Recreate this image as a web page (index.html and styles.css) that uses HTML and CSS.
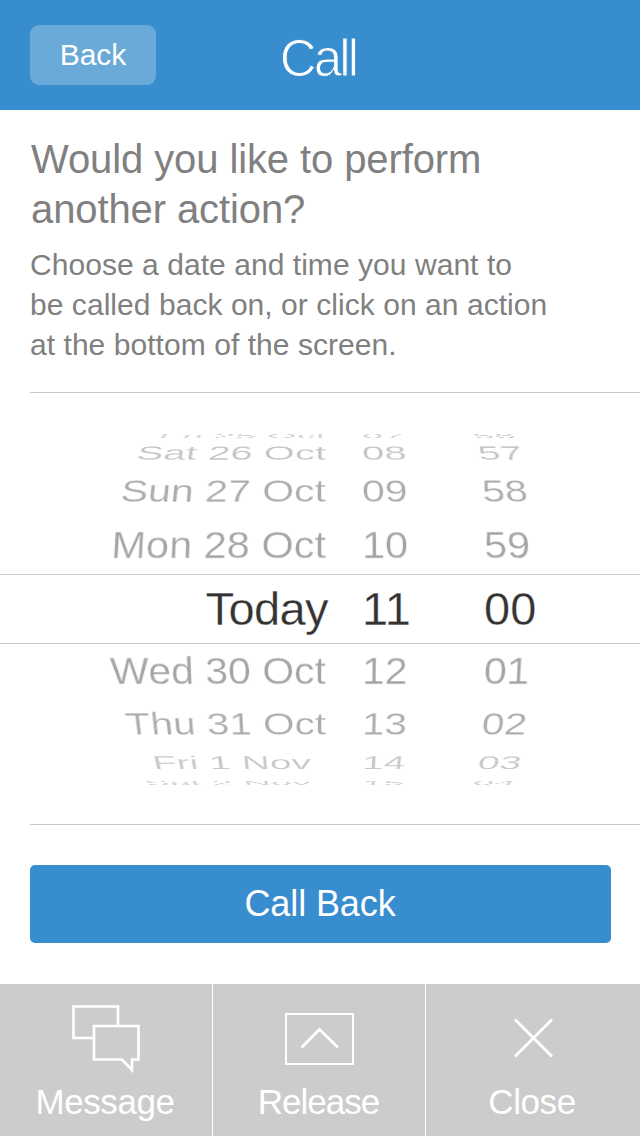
FILE: index.html
```html
<!DOCTYPE html>
<html lang="en">
<head>
<meta charset="utf-8">
<title>Call</title>
<link rel="stylesheet" href="styles.css">
</head>
<body>
<div class="screen">
  <header class="topbar">
    <button class="back">Back</button>
    <h1 class="title">Call</h1>
  </header>
  <main class="content">
    <section class="intro">
      <h2 class="question">Would you like to perform<br>another action?</h2>
      <p class="hint">Choose a date and time you want to<br>be called back on, or click on an action<br>at the bottom of the screen.</p>
    </section>
    <section class="picker">
      <div class="wheel">
        <div class="row up4"><span class="date">Fri 25 Oct</span><span class="hour">07</span><span class="minute">56</span></div>
        <div class="row up3"><span class="date">Sat 26 Oct</span><span class="hour">08</span><span class="minute">57</span></div>
        <div class="row up2"><span class="date">Sun 27 Oct</span><span class="hour">09</span><span class="minute">58</span></div>
        <div class="row up1"><span class="date">Mon 28 Oct</span><span class="hour">10</span><span class="minute">59</span></div>
        <div class="row current"><span class="date">Today</span><span class="hour">11</span><span class="minute">00</span></div>
        <div class="row down1"><span class="date">Wed 30 Oct</span><span class="hour">12</span><span class="minute">01</span></div>
        <div class="row down2"><span class="date">Thu 31 Oct</span><span class="hour">13</span><span class="minute">02</span></div>
        <div class="row down3"><span class="date">Fri 1 Nov</span><span class="hour">14</span><span class="minute">03</span></div>
        <div class="row down4"><span class="date">Sat 2 Nov</span><span class="hour">15</span><span class="minute">04</span></div>
      </div>
    </section>
    <button class="callback">Call Back</button>
  </main>
  <nav class="actions">
    <a class="action message">
      <svg class="icon" width="70" height="70" viewBox="0 0 70 70"><path d="M22 35H2.500V3.500H47V22M23 23H67.500V56.500H61V67L51 56.500H23Z"/></svg>
      <span class="label">Message</span>
    </a>
    <a class="action release">
      <svg class="icon" width="70" height="70" viewBox="0 0 70 70"><path class="frame" d="M2 11H69V61H2Z"/><path d="M17.500 44.500L35.500 26.500L54 44.500"/></svg>
      <span class="label">Release</span>
    </a>
    <a class="action close">
      <svg class="icon" width="70" height="70" viewBox="0 0 70 70"><path d="M17 16.500L54 53.500M54 16.500L17 53.500"/></svg>
      <span class="label">Close</span>
    </a>
  </nav>
</div>
</body>
</html>
```
FILE: styles.css
```css
* { box-sizing: border-box; }
body {
  margin: 0;
  background: #fff;
  font-family: "Liberation Sans", Arial, sans-serif;
}
.screen {
  display: flex;
  flex-direction: column;
  width: 640px;
  height: 1136px;
  overflow: hidden;
}
button { border: 0; padding: 0; font-family: inherit; color: #fff; }

.topbar {
  display: grid;
  grid-template-columns: 126px 1fr 126px;
  height: 110px;
  padding: 25px 30px;
  background: #388dce;
}
.back {
  height: 60px;
  border-radius: 9px;
  background: #6aaad9;
  font-size: 30px;
  line-height: 60px;
}
.title {
  margin: 0;
  padding-right: 4px;
  text-align: center;
  color: #fff;
  font-size: 51px;
  font-weight: 400;
  line-height: 67px;
  letter-spacing: -2.8px;
  -webkit-text-stroke: 1px #388dce;
}

.content { flex: 1; display: flex; flex-direction: column; }
.intro {
  height: 283px;
  margin-left: 30px;
  padding-top: 24px;
  border-bottom: 1px solid #c8c8c8;
  color: #808080;
}
.question {
  margin: 0 0 0 1px;
  font-size: 40px;
  font-weight: 400;
  line-height: 50px;
  letter-spacing: -.1px;
}
.hint {
  margin: 11px 0 0;
  font-size: 30px;
  line-height: 40px;
  letter-spacing: .05px;
}

.picker {
  height: 432px;
  padding-top: 39px;
  background: linear-gradient(#c8c8c8, #c8c8c8) 30px 100% / 610px 1px no-repeat;
}
.wheel {
  display: flex;
  flex-direction: column;
  height: 353px;
  overflow: hidden;
}
.row {
  flex: none;
  display: grid;
  grid-template-columns: 326px 158px 1fr;
  align-items: center;
  line-height: 0;
  white-space: pre;
  transform-origin: 326px 50%;
  -webkit-text-stroke: .3px #fff;
}
.date { text-align: right; }
.hour { padding-left: 36px; }
.up4 { height: 8px; font-size: 38px; color: #d0d0d0; transform: perspective(1300px) rotateX(81deg); }
.up3 { height: 26px; font-size: 40px; color: #c4c4c4; transform: perspective(1300px) rotateX(61deg); }
.up2 { height: 50px; font-size: 41px; color: #acacac; transform: perspective(1300px) rotateX(40deg); }
.up1 { height: 58px; font-size: 41.500px; color: #a4a4a4; transform: perspective(1300px) rotateX(20deg); }
.current {
  height: 70px;
  border: solid #c8c8c8;
  border-width: 1px 0;
  color: #333;
  font-size: 47px;
}
.current .date { margin-right: -2px; letter-spacing: -.6px; }
.down1 { height: 54px; font-size: 41px; color: #a4a4a4; transform: perspective(1300px) rotateX(-20deg); }
.down2 { height: 52px; font-size: 40.500px; color: #acacac; transform: perspective(1300px) rotateX(-40deg); }
.down3 { height: 26px; font-size: 39px; color: #c8c8c8; transform: perspective(1300px) rotateX(-61deg); }
.down4 { height: 14px; font-size: 38px; color: #d0d0d0; transform: perspective(1300px) rotateX(-81deg); }
.down3 .date, .down4 .date { padding-right: 15px; }
.up3 .minute, .down3 .minute { margin-left: -6px; }
.up4 .minute, .down4 .minute { margin-left: -11px; }
.up2 .minute, .down2 .minute { margin-left: -2px; }

.callback {
  width: 581px;
  height: 78px;
  margin: 40px 0 0 30px;
  padding-right: 1px;
  border-radius: 5px;
  background: #388dce;
  font-size: 36px;
  letter-spacing: -.1px;
}

.actions {
  display: grid;
  grid-template-columns: 213px 213px 214px;
  height: 152px;
  background: #ccc;
}
.action {
  display: flex;
  flex-direction: column;
  align-items: center;
  padding-top: 19px;
  border-right: 1px solid #fff;
  color: #fff;
}
.action:last-child { border-right: 0; }
.icon { fill: none; stroke: #fff; stroke-width: 2.700; }
.release .frame { stroke-width: 2; }
.label {
  margin: 9px 2px 0 0;
  font-size: 35px;
  line-height: 40px;
  letter-spacing: -.4px;
}
.release .label { margin-right: 1px; letter-spacing: -1px; }
```
